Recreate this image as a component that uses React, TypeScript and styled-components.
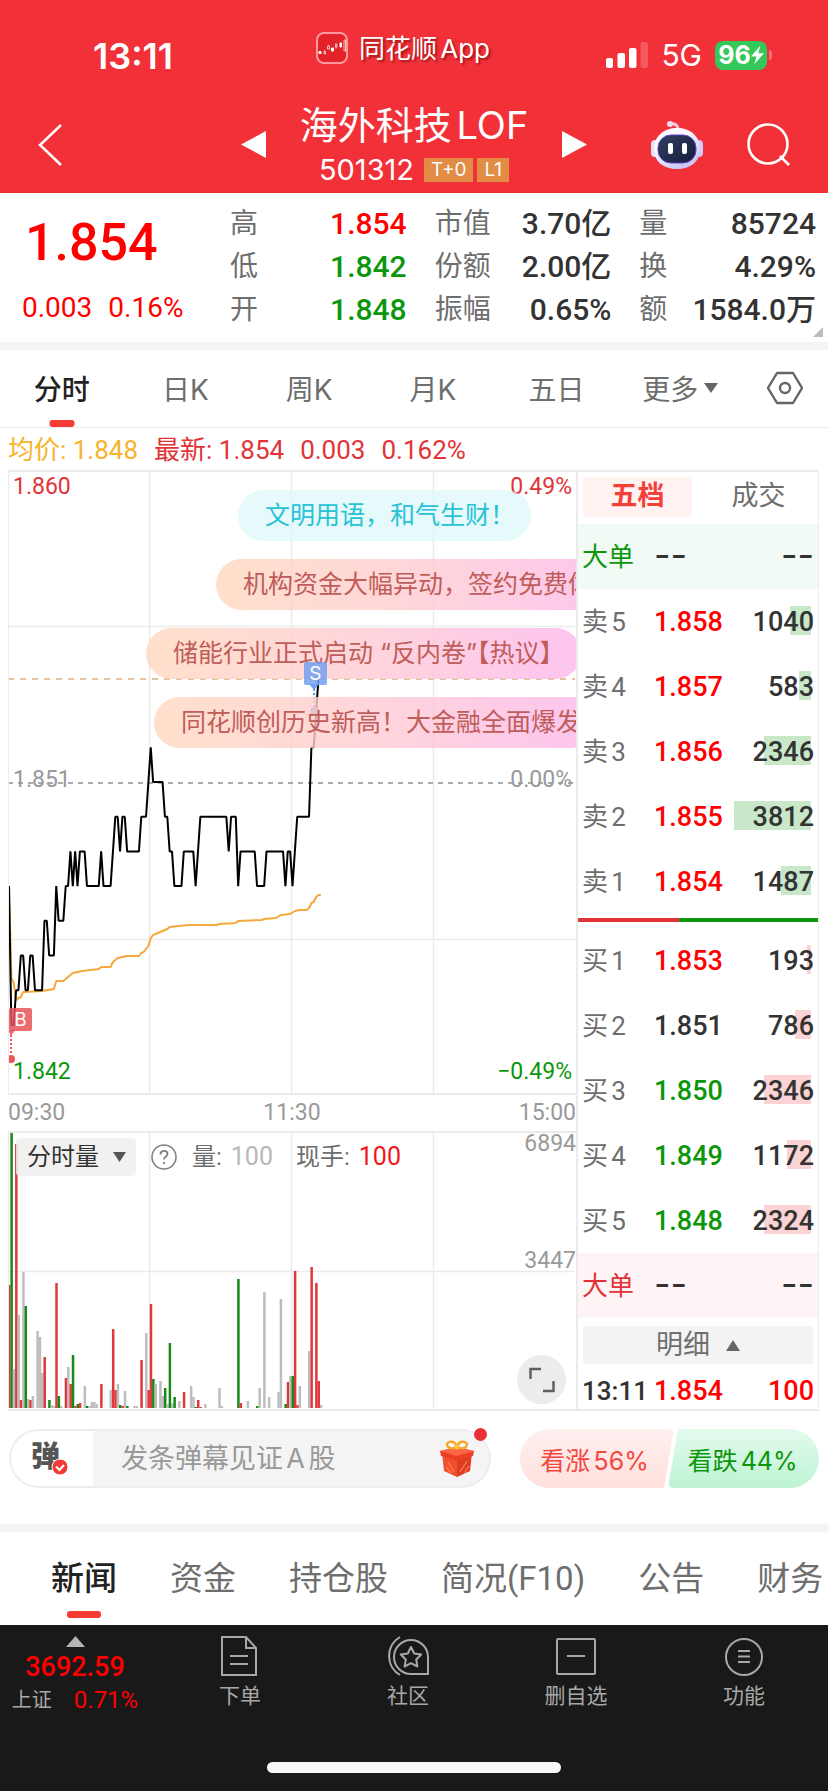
import React from "react";
import styled, { createGlobalStyle, css } from "styled-components";

const RED = "#e23338";
const HOT = "#ff0000";
const GREEN = "#0b960b";
const INK = "#333333";
const MUTED = "#6e6e6e";
const LINE = "#ebebeb";

const NUM = `"Roboto", "Noto Sans CJK SC", sans-serif`;
const UI = `"Inter", "Noto Sans CJK SC", sans-serif`;

const Global = createGlobalStyle`
  *, *::before, *::after { box-sizing: border-box; }
  body {
    margin: 0;
    background: #fff;
    color: ${INK};
    font-family: ${UI};
    text-autospace: normal;
  }
  button, input, select {
    margin: 0;
    padding: 0;
    border: 0;
    background: none;
    color: inherit;
    font: inherit;
  }
  svg { display: block; }
  dl, dd, dt, h1, p { margin: 0; font-weight: inherit; }
`;

const Page = styled.main`
  display: flex;
  flex-direction: column;
  min-width: 0;
  overflow: hidden;
`;

/* ---------- header ---------- */

const Header = styled.header`
  height: 193px;
  background: #f23038;
  color: #fff;
`;

const StatusBar = styled.div`
  display: grid;
  grid-template-columns: 1fr auto 1fr;
  padding: 20px 22px 0 0;
  height: 90px;
`;

const Clock = styled.div`
  padding: 14px 0 0 93px;
  font-size: 36px;
  line-height: 44px;
  font-weight: 600;
`;

const AppTag = styled.div`
  display: flex;
  align-items: flex-start;
  gap: 11px;
  padding-top: 12px;
  font-size: 26px;
  line-height: 34px;
  text-shadow: 2px 2px 2px rgba(80, 0, 0, 0.5);
`;

const Signals = styled.div`
  display: flex;
  justify-content: flex-end;
  align-items: center;
  height: 70px;
  padding-right: 34px;
  font-size: 30px;
  line-height: 36px;
`;

const Network = styled.span`
  margin: 0 13px;
`;

const Battery = styled.span`
  display: flex;
  align-items: center;
  justify-content: center;
  width: 52px;
  height: 29px;
  border-radius: 8px;
  background: #34c759;
  font-size: 25px;
  font-weight: 700;
`;

const BatteryTip = styled.span`
  width: 3px;
  height: 10px;
  margin-left: 2px;
  border-radius: 0 3px 3px 0;
  background: rgba(255, 255, 255, 0.3);
`;

const TitleBar = styled.div`
  display: grid;
  grid-template-columns: 1fr auto 1fr;
  align-items: center;
  height: 103px;
  padding: 6px 38px 0 38px;
`;

const IconButton = styled.button`
  display: inline-flex;
  width: max-content;
  cursor: pointer;
`;

const Stock = styled.div`
  display: flex;
  align-items: center;
  gap: 34px;
`;

const StockName = styled.h1`
  font-size: 38px;
  line-height: 48px;
  font-weight: 400;
`;

const StockMeta = styled.p`
  display: flex;
  align-items: center;
  justify-content: center;
  gap: 4px;
  margin-top: 3px;
  font-size: 29px;
  line-height: 36px;
`;

const Code = styled.span`
  margin-right: 6px;
`;

const Badge = styled.span`
  height: 24px;
  padding: 0 7px;
  background: #e28c45;
  font-size: 19px;
  line-height: 24px;
`;

const Actions = styled.div`
  display: flex;
  justify-content: flex-end;
  align-items: center;
  gap: 44px;
`;

/* ---------- quote summary ---------- */

const Quote = styled.section`
  position: relative;
  display: grid;
  grid-template-columns: 202px repeat(3, 1fr);
  column-gap: 28px;
  height: 149px;
  padding: 9px 12px 0 0;
  font-family: ${NUM};
`;

const PriceBlock = styled.div`
  padding-left: 22px;
  color: ${HOT};
`;

const Price = styled.div`
  padding-left: 3px;
  font-size: 52px;
  line-height: 82px;
  font-weight: 500;
`;

const Change = styled.div`
  display: flex;
  gap: 16px;
  font-size: 28px;
  line-height: 48px;
`;

const Stats = styled.dl`
  display: grid;
  grid-template-columns: auto 1fr;
  grid-auto-rows: 43px;
  line-height: 43px;
`;

const StatName = styled.dt`
  color: ${MUTED};
  font-size: 28px;
`;

const StatValue = styled.dd<{ $color?: string }>`
  color: ${(p) => p.$color ?? INK};
  font-size: 30px;
  font-weight: 500;
  text-align: right;
  white-space: nowrap;
  text-autospace: no-autospace;
`;

const Corner = styled.svg`
  position: absolute;
  right: 5px;
  bottom: 5px;
`;

const Band = styled.div`
  height: 8px;
  background: #f4f4f4;
`;

/* ---------- period tabs ---------- */

const Periods = styled.nav`
  display: grid;
  grid-template-columns: repeat(6, 1fr) 86px;
  height: 78px;
  border-bottom: 1px solid ${LINE};
`;

const underline = css`
  &::after {
    content: "";
    position: absolute;
    left: 50%;
    bottom: var(--drop);
    width: var(--bar);
    height: 7px;
    transform: translateX(-50%);
    border-radius: 3px;
    background: #f63b34;
  }
`;

const Period = styled.button<{ $active?: boolean }>`
  --bar: 25px;
  --drop: 0px;
  position: relative;
  display: flex;
  align-items: center;
  justify-content: center;
  gap: 6px;
  padding-bottom: 2px;
  color: ${(p) => (p.$active ? "#222" : MUTED)};
  font-size: 28px;
  font-weight: ${(p) => (p.$active ? 500 : 400)};
  text-autospace: no-autospace;
  white-space: nowrap;
  cursor: pointer;
  ${(p) => p.$active && underline}
`;

const Legend = styled.p`
  display: flex;
  gap: 16px;
  height: 42px;
  padding-left: 8px;
  color: ${RED};
  font-family: ${NUM};
  font-size: 26px;
  line-height: 44px;
  white-space: nowrap;
`;

const Average = styled.span`
  color: #f7b32b;
`;

/* ---------- charts ---------- */

const Board = styled.section`
  display: grid;
  grid-template-columns: minmax(0, 1fr) 243px;
  padding: 0 9px 0 8px;
`;

const Charts = styled.div`
  display: flex;
  flex-direction: column;
  min-width: 0;
`;

const Frame = styled.div<{ $height: number }>`
  position: relative;
  height: ${(p) => p.$height}px;
  overflow: hidden;
  border: solid ${LINE};
  border-width: 2px 0 2px 1px;
`;

const Plot = styled.svg`
  position: absolute;
  inset: -2px 0 auto -1px;
  width: 100%;
`;

const AxisLabels = styled.div`
  position: absolute;
  inset: 4px 4px 10px 4px;
  display: flex;
  flex-direction: column;
  justify-content: space-between;
  font-family: ${NUM};
  font-size: 23px;
  line-height: 22px;
`;

const AxisRow = styled.div<{ $color: string }>`
  display: flex;
  justify-content: space-between;
  color: ${(p) => p.$color};
`;

const Comments = styled.div`
  position: absolute;
  inset: 18px 0 auto 0;
  display: flex;
  flex-direction: column;
  align-items: flex-start;
  gap: 18px;
`;

const Comment = styled.div<{ $start: number; $calm?: boolean }>`
  height: 51px;
  margin-left: ${(p) => p.$start}px;
  padding: 0 16px 0 27px;
  border-radius: 26px;
  background: ${(p) =>
    p.$calm
      ? "rgba(220, 246, 250, 0.7)"
      : "linear-gradient(90deg, rgba(255,216,190,.8), rgba(255,204,208,.8) 45%, rgba(252,182,236,.8))"};
  color: ${(p) => (p.$calm ? "#26c3d6" : "#bf5d5a")};
  font-size: 25px;
  line-height: 51px;
  white-space: nowrap;
`;

const Marker = styled.div<{ $left: number; $top: number; $color: string }>`
  position: absolute;
  left: ${(p) => p.$left}%;
  top: ${(p) => p.$top}px;
  z-index: 1;
  width: 23px;
  height: 23px;
  border-radius: 2px;
  background: ${(p) => p.$color};
  color: #fff;
  font-size: 19px;
  line-height: 23px;
  text-align: center;
`;

const Times = styled.div`
  display: flex;
  justify-content: space-between;
  height: 36px;
  color: #999;
  font-family: ${NUM};
  font-size: 23px;
  line-height: 35px;
`;

const VolumeBar = styled.div`
  position: absolute;
  inset: 5px auto auto 7px;
  display: flex;
  align-items: center;
  color: ${MUTED};
  font-size: 24px;
  line-height: 38px;
`;

const SelectBox = styled.label`
  position: relative;
  display: block;
  width: 120px;
  margin-right: 15px;
  border-radius: 4px;
  background: rgba(238, 238, 238, 0.85);
  color: ${INK};
`;

const Select = styled.select`
  display: block;
  width: 100%;
  height: 38px;
  padding-left: 11px;
  appearance: none;
`;

const Caret = styled.svg`
  position: absolute;
  right: 10px;
  top: 14px;
  pointer-events: none;
`;

const Reading = styled.span<{ $color: string }>`
  margin: 0 23px 0 9px;
  color: ${(p) => p.$color};
  font-family: ${NUM};
  font-size: 25px;
`;

const ReadingName = styled.span`
  font-family: ${NUM};
`;

const Help = styled(IconButton)`
  margin-right: 15px;
`;

const VolumeScale = styled.div`
  position: absolute;
  inset: 0 0 auto auto;
  display: flex;
  flex-direction: column;
  gap: 95px;
  color: #999;
  font-family: ${NUM};
  font-size: 23px;
  line-height: 22px;
`;

const Expand = styled.button`
  position: absolute;
  right: 10px;
  bottom: 5px;
  display: grid;
  place-items: center;
  width: 49px;
  height: 49px;
  border-radius: 50%;
  background: #ececec;
`;

/* ---------- order book ---------- */

const Book = styled.aside`
  display: flex;
  flex-direction: column;
  border: solid ${LINE};
  border-width: 2px 1px 2px 2px;
`;

const BookTabs = styled.div`
  display: grid;
  grid-template-columns: 1fr 1fr;
  gap: 12px;
  height: 52px;
  padding: 5px 5px 7px;
`;

const BookTab = styled.button<{ $active?: boolean }>`
  padding-bottom: 3px;
  border-radius: 4px;
  background: ${(p) => (p.$active ? "#fff2f1" : "transparent")};
  color: ${(p) => (p.$active ? "#f5403a" : MUTED)};
  font-size: 27px;
  line-height: 36px;
  font-weight: ${(p) => (p.$active ? 700 : 400)};
`;

const BookTable = styled.table`
  width: 100%;
  border-collapse: collapse;
  table-layout: fixed;
  font-family: ${NUM};
  font-size: 27px;
  line-height: 32px;
`;

const BookRow = styled.tr<{ $bg?: string }>`
  height: 65px;
  background: ${(p) => p.$bg ?? "transparent"};
`;

const LevelName = styled.th<{ $color?: string }>`
  width: 76px;
  padding: 0 0 0 4px;
  color: ${(p) => p.$color ?? MUTED};
  font-size: 26px;
  font-weight: 400;
  text-align: left;
  white-space: nowrap;
`;

const LevelPrice = styled.td<{ $color: string }>`
  padding: 0;
  color: ${(p) => p.$color};
  font-weight: 500;
`;

const LevelVolume = styled.td<{ $color?: string }>`
  position: relative;
  padding: 0 4px 0 0;
  color: ${(p) => p.$color ?? INK};
  font-weight: 500;
  text-align: right;
`;

const TradeRow = styled.tr`
  height: 45px;
  & > * {
    padding-top: 8px;
    font-weight: 500;
  }
`;

const Depth = styled.i<{ $color: string }>`
  position: absolute;
  right: 7px;
  top: 17px;
  height: 29px;
  background: ${(p) => p.$color};
`;

const Amount = styled.span`
  position: relative;
`;

const Blank = styled.span`
  font-family: ${UI};
  font-size: 36px;
  font-weight: 400;
`;

const Balance = styled.div`
  height: 4px;
  margin: 4px 0 6px;
  background: linear-gradient(90deg, ${RED} 42%, ${GREEN} 42%);
`;

const Details = styled.button`
  display: flex;
  align-items: center;
  justify-content: center;
  gap: 16px;
  height: 38px;
  margin: 8px 5px 0;
  background: #f3f3f3;
  color: ${MUTED};
  font-size: 27px;
  line-height: 34px;
`;

/* ---------- comment bar and vote ---------- */

const Social = styled.section`
  display: flex;
  align-items: center;
  justify-content: space-between;
  height: 113px;
  padding: 0 9px 18px;
`;

const Composer = styled.div`
  position: relative;
  display: flex;
  align-items: center;
  flex: 0 1 482px;
  min-width: 0;
  height: 59px;
  border: 2px solid #ededed;
  border-radius: 30px;
  background: linear-gradient(90deg, #fff 82px, #f4f4f4 82px);
`;

const Barrage = styled.button`
  position: relative;
  flex: none;
  width: 82px;
  padding: 0 0 3px 20px;
  color: #555;
  font-size: 29px;
  line-height: 40px;
  font-weight: 900;
  text-align: left;
`;

const Tick = styled.svg`
  position: absolute;
  left: 40px;
  top: 21px;
`;

const CommentInput = styled.input`
  flex: 1;
  min-width: 0;
  margin-left: 28px;
  height: 50px;
  outline: none;
  font-size: 27px;
  &::placeholder {
    color: #999;
    opacity: 1;
  }
`;

const Gift = styled(IconButton)`
  margin-right: 14px;
`;

const Dot = styled.span`
  position: absolute;
  right: 2px;
  top: -3px;
  width: 13px;
  height: 13px;
  border-radius: 50%;
  background: #e83036;
`;

const Votes = styled.div`
  display: flex;
  width: 299px;
  height: 59px;
`;

const Vote = styled.button<{ $up?: boolean }>`
  flex: 1;
  font-size: 25px;
  font-weight: 400;
  ${(p) =>
    p.$up
      ? css`
          padding-right: 5px;
          margin-right: -3px;
          border-radius: 30px 6px 6px 30px;
          background: linear-gradient(#fff0ef, #ffe0de);
          color: #f5463f;
          clip-path: polygon(0 0, 100% 0, calc(100% - 10px) 100%, 0 100%);
        `
      : css`
          padding-right: 2px;
          margin-left: -3px;
          border-radius: 6px 30px 30px 6px;
          background: linear-gradient(#e4faed, #bdf3d3);
          color: ${GREEN};
          clip-path: polygon(10px 0, 100% 0, 100% 100%, 0 100%);
        `}
`;

/* ---------- news tabs ---------- */

const NewsTabs = styled.nav`
  display: flex;
  gap: 53px;
  height: 93px;
  padding-left: 51px;
  overflow: hidden;
`;

const NewsTab = styled.button<{ $active?: boolean }>`
  --bar: 34px;
  --drop: 7px;
  position: relative;
  flex: none;
  padding-bottom: 5px;
  color: ${(p) => (p.$active ? "#222" : MUTED)};
  font-family: ${NUM};
  font-size: 33px;
  font-weight: ${(p) => (p.$active ? 500 : 400)};
  ${(p) => p.$active && underline}
`;

/* ---------- bottom bar ---------- */

const Footer = styled.footer`
  height: 166px;
  background: #191919;
  color: #a8a8a8;
`;

const Dock = styled.nav`
  display: grid;
  grid-template-columns: 156px repeat(4, 1fr);
  height: 136px;
`;

const DockItem = styled.button`
  display: flex;
  flex-direction: column;
  align-items: center;
  gap: 6px;
  padding-top: 11px;
  font-size: 21px;
  line-height: 28px;
`;

const IndexItem = styled.button`
  display: flex;
  flex-direction: column;
  align-items: center;
  padding: 11px 6px 0 0;
  color: ${HOT};
  font-family: ${NUM};
`;

const IndexValue = styled.span`
  margin-top: 3px;
  font-size: 27px;
  font-weight: 500;
  line-height: 34px;
`;

const IndexChange = styled.span`
  display: flex;
  gap: 22px;
  font-size: 24px;
  line-height: 32px;
`;

const IndexName = styled.span`
  color: #a8a8a8;
  font-size: 20px;
`;

const HomeBar = styled.div`
  width: 294px;
  height: 11px;
  margin: 1px auto 0;
  border-radius: 6px;
  background: #f8f8f8;
`;

/* ---------- data ---------- */

const MINUTE = 567 / 240;

// [minute, ticks above the previous close]
const PRICES: [number, number][] = [
  [0, -3], [1, -7], [2, -7], [3, -6], [4, -6], [5, -5], [6, -5], [7, -6], [8, -6], [9, -5],
  [10, -5], [11, -6], [14, -6], [15, -4], [16, -4], [17, -5], [19, -5], [20, -3], [21, -4],
  [23, -4], [24, -3], [25, -3], [26, -2], [27, -3], [28, -2], [29, -3], [30, -2], [32, -2],
  [33, -3], [38, -3], [39, -2], [40, -3], [43, -3], [45, -1], [46, -1], [47, -2], [48, -1],
  [49, -1], [50, -2], [55, -2], [56, -1], [58, -1], [60, 1], [61, 0], [65, 0], [66, -1],
  [67, -1], [68, -2], [69, -2], [70, -3], [73, -3], [74, -2], [78, -2], [79, -3], [81, -1],
  [92, -1], [93, -2], [94, -1], [96, -1], [97, -3], [98, -2], [104, -2], [105, -3], [108, -3],
  [109, -2], [116, -2], [117, -3], [118, -2], [119, -2], [120, -3], [122, -1], [127, -1],
  [128, 1], [129, 1], [131, 3],
];

// [minute, y] of the running average
const AVERAGE: [number, number][] = [
  [0, 416], [1, 508], [2, 513], [3, 530], [4, 528], [5, 527], [6, 522], [14, 521], [19, 519],
  [20, 511], [23, 511], [27, 503], [31, 501], [38, 499], [39, 497], [43, 497], [44, 492],
  [46, 488], [50, 486], [55, 486], [56, 483], [57, 482], [58, 479], [59, 476], [60, 468],
  [61, 465], [63, 463], [65, 461], [67, 459], [68, 457], [76, 455], [88, 455], [89, 454],
  [96, 453], [97, 451], [107, 450], [108, 449], [113, 448], [115, 445], [119, 444], [121, 441],
  [123, 440], [126, 440], [127, 438], [128, 433], [129, 432], [130, 427], [131, 425], [132, 425],
];

type Tone = "r" | "g" | "n";
const VOLUMES: [number, number, Tone][] = [
  [0, 123, "r"], [1, 277, "g"], [2, 39, "n"], [3, 264, "r"], [4, 93, "n"], [5, 8, "r"],
  [6, 136, "n"], [7, 102, "g"], [8, 9, "n"], [9, 8, "r"], [10, 12, "n"], [12, 77, "n"],
  [13, 71, "n"], [14, 35, "n"], [15, 51, "r"], [17, 8, "g"], [18, 3, "n"], [19, 2, "n"],
  [20, 125, "r"], [21, 12, "g"], [22, 2, "n"], [24, 30, "r"], [25, 41, "n"], [26, 24, "r"],
  [27, 53, "g"], [28, 2, "r"], [29, 4, "g"], [30, 5, "r"], [32, 22, "n"], [33, 2, "g"],
  [34, 2, "n"], [35, 6, "n"], [36, 6, "n"], [37, 4, "n"], [39, 24, "r"], [43, 18, "n"],
  [44, 79, "r"], [45, 18, "r"], [46, 24, "n"], [47, 3, "g"], [48, 2, "r"], [49, 17, "n"],
  [50, 2, "g"], [53, 2, "n"], [54, 2, "n"], [56, 48, "r"], [58, 75, "n"], [59, 18, "r"],
  [60, 104, "r"], [61, 29, "g"], [62, 24, "n"], [64, 27, "n"], [65, 12, "n"], [66, 20, "g"],
  [67, 4, "n"], [68, 65, "g"], [69, 5, "n"], [70, 11, "g"], [72, 7, "n"], [74, 16, "r"],
  [77, 22, "n"], [78, 11, "n"], [79, 1, "g"], [80, 8, "r"], [81, 1, "r"], [83, 4, "n"],
  [89, 20, "n"], [90, 2, "n"], [97, 129, "g"], [98, 5, "r"], [101, 7, "n"], [105, 2, "g"],
  [106, 20, "n"], [108, 116, "n"], [110, 11, "n"], [114, 16, "n"], [115, 109, "n"],
  [117, 4, "g"], [118, 26, "r"], [119, 32, "n"], [120, 32, "g"], [121, 137, "r"], [122, 3, "r"],
  [123, 22, "n"], [127, 57, "n"], [128, 141, "r"], [130, 125, "r"], [131, 27, "r"], [132, 3, "n"],
];
const TONES: Record<Tone, string> = { r: "#e0383c", g: "#158a15", n: "#bdbdbd" };

const pricePoints = PRICES.map(([m, t]) => `${1 + m * MINUTE},${312 - t * 34.7}`).join(" ");
const averagePoints = AVERAGE.map(([m, y]) => `${1 + m * MINUTE},${y}`).join(" ");

type Level = { name: string; price: string; amount: number; color: string };
const SELLS: Level[] = [
  { name: "卖5", price: "1.858", amount: 1040, color: HOT },
  { name: "卖4", price: "1.857", amount: 583, color: HOT },
  { name: "卖3", price: "1.856", amount: 2346, color: HOT },
  { name: "卖2", price: "1.855", amount: 3812, color: HOT },
  { name: "卖1", price: "1.854", amount: 1487, color: HOT },
];
const BUYS: Level[] = [
  { name: "买1", price: "1.853", amount: 193, color: HOT },
  { name: "买2", price: "1.851", amount: 786, color: INK },
  { name: "买3", price: "1.850", amount: 2346, color: GREEN },
  { name: "买4", price: "1.849", amount: 1172, color: GREEN },
  { name: "买5", price: "1.848", amount: 2324, color: GREEN },
];
const DEEPEST = 3812;

const STATS: [string, string, string?][][] = [
  [["高", "1.854", HOT], ["低", "1.842", GREEN], ["开", "1.848", GREEN]],
  [["市值", "3.70亿"], ["份额", "2.00亿"], ["振幅", "0.65%"]],
  [["量", "85724"], ["换", "4.29%"], ["额", "1584.0万"]],
];

/* ---------- icons ---------- */

const AppLogo = () => (
  <svg width="32" height="32" viewBox="0 0 32 32" fill="none">
    <rect x="1" y="1" width="30" height="30" rx="7" fill="#e42229" stroke="#ff9a9c" strokeWidth="2" />
    <g fill="#fff" stroke="#fff">
      <path d="M3 19.500h2v2H3zM15.500 16h2v3h-2zM24 11h1.500v4H24z" />
      <path d="M8 19.500h1.500v2.500H8zM11.500 14h2v3h-2zM19.500 12.500h1.500v2.500h-1.500zM28 8h1.500v11H28zM8.700 18v1M12.500 13v1M20 11v1M20 15v1.500" fill="none" strokeWidth="0.700" />
    </g>
  </svg>
);

const SignalIcon = () => (
  <svg width="42" height="26" viewBox="0 0 42 26" fill="#fff">
    <rect x="0" y="16" width="7" height="10" rx="2" />
    <rect x="11.500" y="11" width="7.500" height="15" rx="2" />
    <rect x="23" y="6" width="7.500" height="20" rx="2" />
    <rect x="34.500" y="0" width="7.500" height="26" rx="2" opacity="0.200" />
  </svg>
);

const Bolt = () => (
  <svg width="13" height="20" viewBox="0 0 14 20" fill="#fff">
    <path d="M10 0 0 11.500h6L3.500 20 14 8H8z" />
  </svg>
);

const Robot = () => (
  <svg width="52" height="48" viewBox="0 0 52 48">
    <defs>
      <linearGradient id="shell" x1="0" y1="0" x2="0.600" y2="1">
        <stop offset="0.400" stopColor="#fbf9ff" />
        <stop offset="1" stopColor="#c9c4f6" />
      </linearGradient>
      <linearGradient id="visor" x1="0" y1="0" x2="1" y2="1">
        <stop offset="0" stopColor="#343f60" />
        <stop offset="1" stopColor="#141d3c" />
      </linearGradient>
    </defs>
    <path d="M19 3c5-1 8 1 8 6" fill="none" stroke="#f5c6dc" strokeWidth="3" />
    <circle cx="19" cy="3" r="3" fill="#f4d9ee" />
    <rect x="0" y="19" width="9" height="17" rx="4" fill="#e4e0fb" />
    <rect x="43" y="19" width="9" height="17" rx="4" fill="#cfcaf7" />
    <path d="M26 7C39 7 49 15 49 28S39 48 26 48 3 41 3 28 13 7 26 7z" fill="url(#shell)" />
    <rect x="7" y="14" width="38" height="28" rx="13" fill="url(#visor)" stroke="#5a45c0" strokeWidth="1" />
    <rect x="17" y="22" width="5" height="11" rx="2" fill="#fff" />
    <rect x="31" y="22" width="5" height="11" rx="2" fill="#fff" />
  </svg>
);

const GiftIcon = () => (
  <svg width="36" height="37" viewBox="0 0 36 37">
    <path d="M3 13 18 18v19L5 31z" fill="#f0502f" />
    <path d="M33 13 18 18v19l13-6z" fill="#e03c24" />
    <path d="M1 11 18 7l17 4-1 5-16 5L2 16z" fill="#ea4026" />
    <path d="M1 11 18 7l17 4-17 5z" fill="#fb6545" />
    <path d="M9 22l6 10M7 27l5 6M28 21l-7 11M30 26l-5 7" stroke="#ff7d50" strokeWidth="1.200" />
    <ellipse cx="12.500" cy="5" rx="4.500" ry="3.300" fill="none" stroke="#f5a623" strokeWidth="2.400" transform="rotate(12 12.500 5)" />
    <ellipse cx="23.500" cy="5" rx="4.500" ry="3.300" fill="none" stroke="#f5a623" strokeWidth="2.400" transform="rotate(-12 23.500 5)" />
    <circle cx="18" cy="7" r="2.500" fill="#ffc93c" />
  </svg>
);

const LevelRow = ({ level, shade }: { level: Level; shade: string }) => (
  <BookRow>
    <LevelName scope="row">{level.name}</LevelName>
    <LevelPrice $color={level.color}>{level.price}</LevelPrice>
    <LevelVolume>
      <Depth $color={shade} style={{ width: Math.round((level.amount / DEEPEST) * 77) }} />
      <Amount>{level.amount}</Amount>
    </LevelVolume>
  </BookRow>
);

const BigOrderRow = ({ color, bg }: { color: string; bg: string }) => (
  <BookRow $bg={bg}>
    <LevelName scope="row" $color={color}>大单</LevelName>
    <LevelPrice $color={INK}><Blank>--</Blank></LevelPrice>
    <LevelVolume><Blank>--</Blank></LevelVolume>
  </BookRow>
);

const PriceChart = () => (
  <Frame $height={625}>
    <Plot height="625" viewBox="0 0 567 625" preserveAspectRatio="none" fill="none">
      <path d="M141.500 0V625M283.500 0V625M425.500 0V625M0 156.500H567M0 469.500H567" stroke={LINE} strokeWidth="1.500" />
      <path d="M0 209H567" stroke="#e3c39a" strokeWidth="2" strokeDasharray="6 6" />
      <path d="M0 313H567" stroke="#8f8f8f" strokeWidth="1.500" strokeDasharray="5 5" />
      <polyline points={averagePoints} stroke="#f5a83c" strokeWidth="2" strokeLinejoin="round" />
      <polyline points={pricePoints} stroke="#000" strokeWidth="2" strokeLinejoin="bevel" />
      <path d="M306 215V241" stroke="#5b97ee" strokeWidth="2" strokeDasharray="2 2" />
      <path d="M301 214h10l-5 6z" fill="#6aa4f2" />
      <circle cx="306" cy="241" r="4" fill="#6f93dd" />
      <path d="M3 565V585" stroke="#e9555a" strokeWidth="2" strokeDasharray="2 2" />
      <path d="M0 560h7l-4 6z" fill="#ec6a6d" />
      <circle cx="3" cy="589" r="4" fill="#e9555a" />
    </Plot>
    <Marker $left={52} $top={190} $color="rgba(116, 160, 238, 0.85)">S</Marker>
    <Marker $left={0} $top={536} $color="rgba(232, 84, 88, 0.85)">B</Marker>
    <AxisLabels>
      <AxisRow $color={RED}><span>1.860</span><span>0.49%</span></AxisRow>
      <AxisRow $color="#999"><span>1.851</span><span>0.00%</span></AxisRow>
      <AxisRow $color={GREEN}><span>1.842</span><span>−0.49%</span></AxisRow>
    </AxisLabels>
    <Comments>
      <Comment $start={229} $calm>文明用语，和气生财！</Comment>
      <Comment $start={207}>机构资金大幅异动，签约免费体验</Comment>
      <Comment $start={137}>储能行业正式启动 “反内卷”【热议】</Comment>
      <Comment $start={145}>同花顺创历史新高！大金融全面爆发</Comment>
    </Comments>
  </Frame>
);

const VolumeChart = () => (
  <Frame $height={280}>
    <Plot height="280" viewBox="0 0 567 280" preserveAspectRatio="none">
      <path d="M141.500 0V280M283.500 0V280M425.500 0V280M0 140.500H567" stroke={LINE} strokeWidth="1.500" />
      {VOLUMES.map(([m, h, tone]) => (
        <rect key={m} x={m * MINUTE} y={277 - h} width="2.500" height={h} fill={TONES[tone]} />
      ))}
    </Plot>
    <VolumeBar>
      <SelectBox>
        <Select aria-label="指标" defaultValue="vol">
          <option value="vol">分时量</option>
        </Select>
        <Caret width="13" height="10" viewBox="0 0 13 10"><path d="M0 0h13L6.500 10z" fill="#555" /></Caret>
      </SelectBox>
      <Help aria-label="说明">
        <svg width="26" height="26" viewBox="0 0 26 26" fill="none" stroke="#808080" strokeWidth="1.600">
          <circle cx="13" cy="13" r="12" />
          <path d="M9.500 10.500c0-5 7-4.500 7-.5 0 2.500-3.500 2.500-3.500 5.500M13 18v2" strokeWidth="1.800" />
        </svg>
      </Help>
      <ReadingName>量:</ReadingName>
      <Reading $color="#b8b8b8">100</Reading>
      <ReadingName>现手:</ReadingName>
      <Reading $color="#f01818">100</Reading>
    </VolumeBar>
    <VolumeScale><span>6894</span><span>3447</span></VolumeScale>
    <Expand aria-label="全屏">
      <svg width="26" height="26" viewBox="0 0 26 26" fill="none" stroke="#606060" strokeWidth="2.500">
        <path d="M1.500 12V2H12M24.500 14v10H14" />
      </svg>
    </Expand>
  </Frame>
);

export default function App() {
  return (
    <Page>
      <Global />
      <Header>
        <StatusBar>
          <Clock>13:11</Clock>
          <AppTag><AppLogo /><span>同花顺App</span></AppTag>
          <Signals>
            <SignalIcon />
            <Network>5G</Network>
            <Battery>96<Bolt /></Battery>
            <BatteryTip />
          </Signals>
        </StatusBar>
        <TitleBar>
          <IconButton aria-label="返回">
            <svg width="25" height="42" viewBox="0 0 25 42" fill="none" stroke="#fff" strokeWidth="2.500">
              <path d="M23 1 2 21l21 20" />
            </svg>
          </IconButton>
          <Stock>
            <IconButton aria-label="上一只">
              <svg width="25" height="27" viewBox="0 0 25 27" fill="#fff"><path d="M25 0v27L0 13.500z" /></svg>
            </IconButton>
            <div>
              <StockName>海外科技LOF</StockName>
              <StockMeta><Code>501312</Code><Badge>T+0</Badge><Badge>L1</Badge></StockMeta>
            </div>
            <IconButton aria-label="下一只">
              <svg width="25" height="27" viewBox="0 0 25 27" fill="#fff"><path d="M0 0v27l25-13.500z" /></svg>
            </IconButton>
          </Stock>
          <Actions>
            <IconButton aria-label="助手"><Robot /></IconButton>
            <IconButton aria-label="搜索">
              <svg width="43" height="43" viewBox="0 0 43 43" fill="none" stroke="#fff" strokeWidth="2.600">
                <circle cx="21" cy="21" r="19.500" />
                <path d="M33 33l9 9" />
              </svg>
            </IconButton>
          </Actions>
        </TitleBar>
      </Header>

      <Quote>
        <PriceBlock>
          <Price>1.854</Price>
          <Change><span>0.003</span><span>0.16%</span></Change>
        </PriceBlock>
        {STATS.map((column) => (
          <Stats key={column[0][0]}>
            {column.map(([name, value, color]) => (
              <React.Fragment key={name}>
                <StatName>{name}</StatName>
                <StatValue $color={color}>{value}</StatValue>
              </React.Fragment>
            ))}
          </Stats>
        ))}
        <Corner width="10" height="10" viewBox="0 0 10 10"><path d="M10 0v10H0z" fill="#bdbdbd" /></Corner>
      </Quote>
      <Band />

      <Periods>
        <Period $active>分时</Period>
        <Period>日K</Period>
        <Period>周K</Period>
        <Period>月K</Period>
        <Period>五日</Period>
        <Period>
          更多
          <svg width="14" height="10" viewBox="0 0 14 10"><path d="M0 0h14L7 10z" fill="#666" /></svg>
        </Period>
        <Period aria-label="设置">
          <svg width="36" height="34" viewBox="0 0 36 34" fill="none" stroke="#666" strokeWidth="2.400">
            <path d="M10 2h16l9 15-9 15H10L1 17z" strokeLinejoin="round" />
            <circle cx="18" cy="17" r="5" />
          </svg>
        </Period>
      </Periods>
      <Legend>
        <Average>均价: 1.848</Average>
        <span>最新: 1.854</span>
        <span>0.003</span>
        <span>0.162%</span>
      </Legend>

      <Board>
        <Charts>
          <PriceChart />
          <Times><span>09:30</span><span>11:30</span><span>15:00</span></Times>
          <VolumeChart />
        </Charts>
        <Book>
          <BookTabs>
            <BookTab $active>五档</BookTab>
            <BookTab>成交</BookTab>
          </BookTabs>
          <BookTable>
            <tbody>
              <BigOrderRow color={GREEN} bg="#f1faf5" />
              {SELLS.map((level) => <LevelRow key={level.name} level={level} shade="#c8e8c9" />)}
            </tbody>
          </BookTable>
          <Balance />
          <BookTable>
            <tbody>
              {BUYS.map((level) => <LevelRow key={level.name} level={level} shade="#fbd3d5" />)}
              <BigOrderRow color={RED} bg="#fff4f5" />
            </tbody>
          </BookTable>
          <Details>
            明细
            <svg width="14" height="11" viewBox="0 0 14 11"><path d="M7 0l7 11H0z" fill="#666" /></svg>
          </Details>
          <BookTable>
            <tbody>
              <TradeRow>
                <LevelName scope="row" $color={INK}>13:11</LevelName>
                <LevelPrice $color={HOT}>1.854</LevelPrice>
                <LevelVolume $color={HOT}>100</LevelVolume>
              </TradeRow>
            </tbody>
          </BookTable>
        </Book>
      </Board>

      <Social>
        <Composer>
          <Barrage aria-label="弹幕开关">
            弹
            <Tick width="18" height="18" viewBox="0 0 18 18">
              <circle cx="9" cy="9" r="8" fill="#ee3b35" stroke="#fff" strokeWidth="1" />
              <path d="M5 8.500l3.500 3.500L13 7" fill="none" stroke="#fff" strokeWidth="2" />
            </Tick>
          </Barrage>
          <CommentInput aria-label="弹幕" placeholder="发条弹幕见证A股" />
          <Gift aria-label="礼物"><GiftIcon /></Gift>
          <Dot />
        </Composer>
        <Votes>
          <Vote $up>看涨56%</Vote>
          <Vote>看跌44%</Vote>
        </Votes>
      </Social>
      <Band />

      <NewsTabs>
        <NewsTab $active>新闻</NewsTab>
        <NewsTab>资金</NewsTab>
        <NewsTab>持仓股</NewsTab>
        <NewsTab>简况(F10)</NewsTab>
        <NewsTab>公告</NewsTab>
        <NewsTab>财务</NewsTab>
      </NewsTabs>

      <Footer>
        <Dock>
          <IndexItem>
            <svg width="19" height="11" viewBox="0 0 19 11"><path d="M9.500 0L19 11H0z" fill="#b4b4b4" /></svg>
            <IndexValue>3692.59</IndexValue>
            <IndexChange><IndexName>上证</IndexName>0.71%</IndexChange>
          </IndexItem>
          <DockItem>
            <svg width="40" height="40" viewBox="0 0 40 40" fill="none" stroke="#a8a8a8" strokeWidth="2">
              <path d="M2 1h24l10 11v27H2zM26 1v11h10M10 20h18M10 28h18" />
            </svg>
            下单
          </DockItem>
          <DockItem>
            <svg width="42" height="40" viewBox="0 0 42 40" fill="none" stroke="#a8a8a8" strokeWidth="2">
              <path d="M41 38H24a17 17 0 1 1 17-17z" />
              <path d="M13 1a22 22 0 0 0 0 38" />
              <path d="M24 11l3.200 6.500 7 1-5 5 1.200 7-6.400-3.300-6.400 3.300 1.200-7-5-5 7-1z" strokeLinejoin="round" />
            </svg>
            社区
          </DockItem>
          <DockItem>
            <svg width="40" height="40" viewBox="0 0 40 40" fill="none" stroke="#a8a8a8" strokeWidth="2">
              <rect x="1" y="3" width="38" height="35" rx="1" />
              <path d="M11 20h18" />
            </svg>
            删自选
          </DockItem>
          <DockItem>
            <svg width="40" height="40" viewBox="0 0 40 40" fill="none" stroke="#a8a8a8" strokeWidth="2">
              <circle cx="20" cy="21" r="18" />
              <path d="M14 15h12M14 20.500h12M14 26h12" />
            </svg>
            功能
          </DockItem>
        </Dock>
        <HomeBar />
      </Footer>
    </Page>
  );
}
